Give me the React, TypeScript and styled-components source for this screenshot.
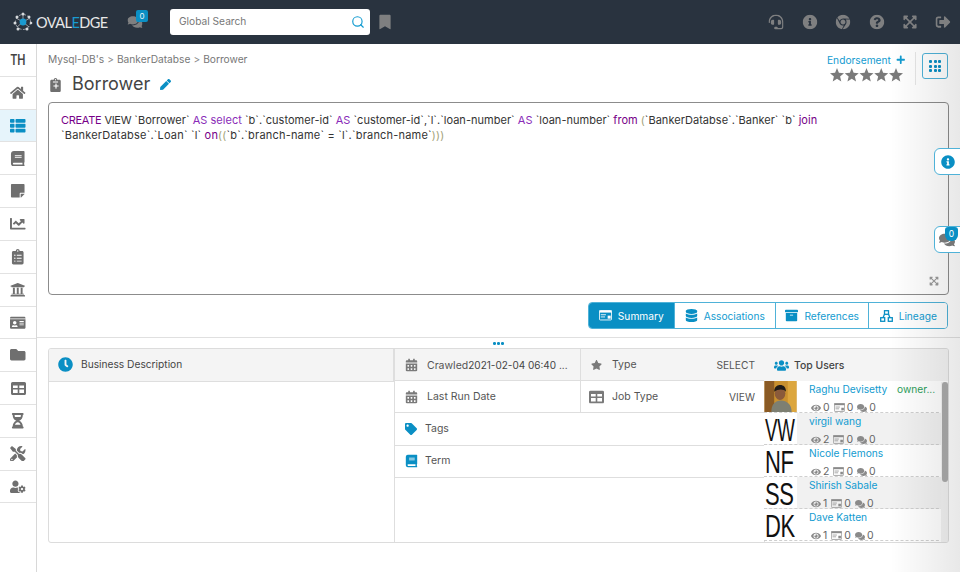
import React from 'react';
import styled, { createGlobalStyle } from 'styled-components';
import {
  FaHome, FaThList, FaBook, FaStickyNote, FaChartLine, FaClipboardList, FaUniversity, FaIdCard, FaFolder,
  FaHourglassHalf, FaTools, FaUserCog, FaHeadset, FaInfoCircle, FaChrome, FaQuestionCircle, FaExpandArrowsAlt,
  FaSignOutAlt, FaComments, FaBookmark, FaPen, FaStar, FaCalendarAlt, FaTag, FaUsers, FaClock, FaDatabase,
  FaArchive, FaEye, FaPlus, FaClipboard,
} from 'react-icons/fa';
import { Search } from 'lucide-react';

const Global = createGlobalStyle`
  html, body { margin: 0; padding: 0; background: #fff; }
  body { width: 960px; height: 572px; overflow: hidden; font-family: Inter, "Noto Sans", "Liberation Sans", sans-serif; color: #444; }
  * { box-sizing: border-box; }
`;

const Page = styled.div`position: relative; width: 960px; height: 572px; overflow: hidden; background: #fff;`;
const Shade = styled.div`
  position: absolute; top: 44px; right: 0; bottom: 0; width: 70px; pointer-events: none; z-index: 5;
  background: linear-gradient(to right, rgba(0,0,0,0), rgba(0,0,0,0.09));
`;
const Header = styled.header`position: absolute; left: 0; top: 0; width: 960px; height: 44px; background: #29333f;`;
const LogoBox = styled.div`position: absolute; left: 13px; top: 12px; width: 20px; height: 20px;`;
const LogoText = styled.div`
  position: absolute; left: 36px; top: 13.5px; font-size: 14.5px; line-height: 17px; font-weight: 400; color: #e8e8e8;
  letter-spacing: -0.55px; white-space: nowrap; font-family: Lato, sans-serif;
  em { font-style: normal; color: #1a9ad0; }
`;
const HeadIcon = styled.div<{ $x: number; $size?: number }>`
  position: absolute; left: ${p => p.$x}px; top: 22px; transform: translate(-50%, -50%); display: flex;
  color: #7e7f80; font-size: ${p => p.$size ?? 15}px;
`;
const HeadBadge = styled.div`
  position: absolute; left: 136px; top: 10px; width: 12px; height: 12px; border-radius: 2px; background: #0a8fc4;
  color: #e8f4fa; font-size: 8px; line-height: 12px; text-align: center;
`;
const SearchBox = styled.div`
  position: absolute; left: 170px; top: 9px; width: 200px; height: 26px; background: #fff; border-radius: 3px;
  font-size: 10.2px; line-height: 25px; color: #777; padding-left: 9px;
`;
const SearchGlyph = styled.div`position: absolute; right: 5px; top: 5.5px; display: flex; color: #129bd0;`;

const Sidebar = styled.nav`position: absolute; left: 0; top: 44px; width: 37px; height: 528px; background: #fff; border-right: 1px solid #d8d8d8;`;
const SideRow = styled.div<{ $active?: boolean }>`
  height: 32.82px; display: flex; align-items: center; justify-content: center; border-bottom: 1px solid #e2e2e2;
  background: ${p => (p.$active ? '#e6f4fb' : '#fff')}; color: ${p => (p.$active ? '#0a8fc4' : '#6f6f6f')}; font-size: 15.5px;
`;
const SideText = styled.span`font-size: 14px; font-weight: 600; color: #444; transform: scaleX(0.78);`;

const Crumbs = styled.div`position: absolute; left: 48px; top: 52px; font-size: 10.2px; line-height: 14px; color: #777; white-space: nowrap;`;
const CrumbSep = styled.span`margin: 0 3px; color: #888;`;
const TitleIcon = styled.div`position: absolute; left: 49px; top: 77px; width: 13px; height: 16px; color: #6f6f6f; font-size: 14px; display: flex; align-items: center; justify-content: center;`;
const TitlePlus = styled.span`position: absolute; left: 3.5px; top: 5.5px; display: flex; color: #fff; font-size: 6px;`;
const Title = styled.h1`position: absolute; left: 72px; top: 73px; margin: 0; font-size: 18px; line-height: 22px; font-weight: 400; color: #444;`;
const TitlePen = styled.div`position: absolute; left: 160px; top: 79px; display: flex; color: #0a8fc4; font-size: 11px;`;

const Endorse = styled.div`position: absolute; left: 827px; top: 52.5px; font-size: 10.2px; line-height: 14px; color: #129bd0; white-space: nowrap;`;
const EndorsePlus = styled.div`position: absolute; left: 896px; top: 55px; display: flex; color: #129bd0; font-size: 9.5px;`;
const Stars = styled.svg`position: absolute; left: 830px; top: 68px; width: 73px; height: 14px; fill: #7a7a7a;`;
const VLine = styled.div`position: absolute; left: 915px; top: 52px; width: 1px; height: 33px; background: #e6e6e6;`;
const AppsButton = styled.div`
  position: absolute; left: 922px; top: 53px; width: 26px; height: 26px; border: 1px solid #4fb2d8; border-radius: 3px;
  display: grid; grid-template-columns: repeat(3, 3px); grid-auto-rows: 3px; gap: 1.2px; align-content: center; justify-content: center;
`;
const AppsDot = styled.i`display: block; background: #0a8fc4; border-radius: 1px;`;

const SqlBox = styled.div`
  position: absolute; left: 48px; top: 102px; width: 901px; height: 193px; border: 1px solid #8c8c8c; border-radius: 4px;
  padding: 10px 12px; font-size: 11px; line-height: 15px; color: #333; background: #fff;
`;
const SqlLine = styled.div<{ $ls: number }>`white-space: nowrap; letter-spacing: ${p => p.$ls}px;`;
const Kw = styled.span`color: #770088;`;
const Kw2 = styled.span`color: #8a2cb8;`;
const Upper = styled.span`letter-spacing: -0.3px;`;
const Paren = styled.span`color: #a3a37a;`;
const SqlExpand = styled.div`position: absolute; right: 9px; bottom: 8px; display: flex; color: #9a9a9a; font-size: 10px;`;

const Tabs = styled.div`
  position: absolute; left: 588px; top: 302px; width: 360px; height: 27px; display: flex; border: 1px solid #4fb2d8; border-radius: 4px; overflow: hidden;
`;
const Tab = styled.div<{ $w: number; $active?: boolean; $first?: boolean }>`
  width: ${p => p.$w}px; display: flex; align-items: center; justify-content: center; gap: 6px; font-size: 10.2px;
  border-left: ${p => (p.$first ? 'none' : '1px solid #4fb2d8')};
  background: ${p => (p.$active ? '#0a8fc4' : '#fff')}; color: ${p => (p.$active ? '#fff' : '#129bd0')};
`;
const TabIcon = styled.span<{ $c?: string }>`display: flex; font-size: 13px; color: ${p => p.$c ?? '#0a8fc4'};`;

const Rule = styled.div`position: absolute; left: 37px; top: 337px; width: 923px; height: 1px; background: #e0e0e0;`;
const Dots = styled.div`position: absolute; left: 493px; top: 342px; display: flex; gap: 1.5px;`;
const Dot = styled.i`display: block; width: 2.5px; height: 2.5px; border-radius: 50%; background: #0a8fc4;`;

const Panel = styled.section`
  position: absolute; left: 48px; top: 348px; width: 901px; height: 195px; border: 1px solid #dcdcdc; border-radius: 3px; background: #fff; overflow: hidden;
`;
const Head = styled.div`position: absolute; background: #f4f4f4; border-bottom: 1px solid #dedede;`;
const DescHead = styled(Head)`
  left: 0; top: 0; width: 345px; height: 33px; display: flex; align-items: center; padding: 0 0 2px 9px; gap: 8px; font-size: 10.2px; color: #444; border-right: 1px solid #dedede;
`;
const ColLine = styled.div<{ $x: number; $h: number }>`position: absolute; left: ${p => p.$x}px; top: 0; width: 1px; height: ${p => p.$h}px; background: #dedede;`;
const Cell = styled.div<{ $x: number; $y: number; $w: number; $grey?: boolean }>`
  position: absolute; left: ${p => p.$x}px; top: ${p => p.$y}px; width: ${p => p.$w}px; height: 32.3px;
  border-bottom: 1px solid #dedede; background: ${p => (p.$grey ? '#f4f4f4' : '#fff')};
  font-size: 10.5px; color: #555; white-space: nowrap;
`;
const CellIcon = styled.span<{ $x: number; $c?: string; $s?: number }>`
  position: absolute; left: ${p => p.$x}px; top: 50%; transform: translateY(-50%); display: flex; color: ${p => p.$c ?? '#7a7a7a'}; font-size: ${p => p.$s ?? 13}px;
`;
const CellLabel = styled.span<{ $x: number }>`position: absolute; left: ${p => p.$x}px; top: 8.5px; line-height: 14px;`;
const CellValue = styled.span`position: absolute; right: 9px; top: 9px; line-height: 14px; font-size: 10.2px;`;
const CellDate = styled.span`color: #444; font-size: 10px;`;

const UsersHead = styled(Head)`
  left: 715px; top: 0; width: 185px; height: 33px; display: flex; align-items: center; padding-left: 10px; gap: 5px; font-size: 10.4px; color: #444; font-weight: 500;
`;
const UserList = styled.div`position: absolute; left: 715px; top: 32px; width: 185px; height: 162px; overflow: hidden;`;
const UserRow = styled.div<{ $grey?: boolean }>`
  position: relative; height: 32.1px; background: ${p => (p.$grey ? '#f1f1f1' : '#fff')}; border-bottom: 1px dashed #cfcfcf;
`;
const Avatar = styled.div`position: absolute; left: 0; top: 0; width: 33px; height: 31px; background: #fff; overflow: hidden; display: flex;`;
const AvatarText = styled.text`font-family: "Liberation Sans", sans-serif; font-size: 22px; fill: #111;`;
const UserName = styled.div`position: absolute; left: 45px; top: 1px; font-size: 10.2px; line-height: 14px; color: #129bd0; white-space: nowrap;`;
const Owner = styled.div`position: absolute; left: 133px; top: 1px; font-size: 10.2px; line-height: 14px; color: #2e9e5b; white-space: nowrap;`;
const Stats = styled.div`position: absolute; left: 47px; top: 20.5px; display: flex; align-items: center; font-size: 10.5px; line-height: 12px; color: #666;`;
const Stat = styled.span`display: flex; align-items: center; gap: 2px; margin-right: 4px; svg { color: #8a8a8a; font-size: 10px; }`;
const Scrollbar = styled.div`position: absolute; left: 893px; top: 33px; width: 6px; height: 100px; border-radius: 3px; background: #ababab;`;
const ScrollTrack = styled.div`position: absolute; left: 892px; top: 33px; width: 8px; height: 160px; background: #f2f2f2;`;

const Float = styled.div<{ $y: number }>`
  position: absolute; left: 934px; top: ${p => p.$y}px; width: 30px; height: 27px; border: 1px solid #4fb2d8; border-radius: 6px 0 0 6px; background: #fff;
  z-index: 6; display: flex; align-items: center; padding-left: 6px; font-size: 14px; color: #0a8fc4;
`;
const FloatBadge = styled.div`
  position: absolute; left: 10px; top: 0; width: 13px; height: 14px; border-radius: 3px 3px 6px 6px; background: #0a8fc4; color: #fff; font-size: 8.5px; line-height: 14px; text-align: center;
`;
const GreyGlyph = styled.span`display: flex; color: #777; font-size: 16px; margin-left: -2px;`;

const CardIcon = ({ c = '#8a8a8a', size = 14 }: { c?: string; size?: number }) => (
  <svg width={size} height={size * 0.8} viewBox="0 0 15 12">
    <rect x="0.5" y="0.5" width="14" height="11" rx="1" fill="none" stroke={c} />
    <rect x="0.5" y="0.5" width="14" height="2.5" fill={c} />
    <rect x="2" y="5" width="6" height="1" fill={c} />
    <rect x="2" y="7.5" width="5" height="1" fill={c} />
    <rect x="10" y="6.5" width="3.5" height="3.5" fill={c} />
  </svg>
);

const TableGlyph = ({ size = 15 }: { size?: number }) => (
  <svg width={size} height={size * 0.87} viewBox="0 0 15 13" fill="currentColor">
    <path fillRule="evenodd" d="M1.5 0h12A1.5 1.5 0 0 1 15 1.5v10a1.5 1.5 0 0 1-1.5 1.5h-12A1.5 1.5 0 0 1 0 11.5v-10A1.5 1.5 0 0 1 1.5 0zM2 3.5V6h4.7V3.5zM8.3 3.5V6H13V3.5zM2 7.5V11h4.7V7.5zM8.3 7.5V11H13V7.5z" />
  </svg>
);

const LineageGlyph = () => (
  <svg width="13" height="12" viewBox="0 0 13 12" fill="none" stroke="currentColor" strokeWidth="1.3">
    <rect x="4.5" y="0.7" width="4" height="3.6" />
    <rect x="0.7" y="7.7" width="4" height="3.6" />
    <rect x="8.3" y="7.7" width="4" height="3.6" />
    <path d="M4.5 4.3L3 7.7M8.5 4.3L10 7.7" />
  </svg>
);

const Logo = () => (
  <svg width="20" height="20" viewBox="0 0 20 20">
    <g stroke="#aeb4ba" strokeWidth="0.8" fill="none">
      <circle cx="10" cy="10" r="7.5" strokeDasharray="3 1.4" />
      <path d="M3 6l7 4M17 6l-7 4M4 15l6-5M16 15l-6-5M10 2v8" />
    </g>
    <g fill="#d6d9dc">
      <circle cx="4" cy="5" r="1.5" /><circle cx="10" cy="2" r="1.5" /><circle cx="16" cy="5" r="1.5" />
      <circle cx="2" cy="11" r="1.5" /><circle cx="18" cy="11" r="1.3" /><circle cx="5" cy="17" r="1.5" /><circle cx="14" cy="17" r="1.5" />
    </g>
    <circle cx="10" cy="10" r="3.4" fill="#1a9ad0" />
  </svg>
);

const Photo = () => (
  <svg width="33" height="31" viewBox="0 0 33 32">
    <rect width="33" height="32" fill="#c8902f" />
    <rect x="0" y="0" width="10" height="32" fill="#8a5a24" />
    <rect x="24" y="0" width="9" height="32" fill="#dca63e" />
    <path d="M7 32c0-8 4-12 10-12s11 4 11 12z" fill="#7d7f72" />
    <ellipse cx="16" cy="13" rx="5.5" ry="6.5" fill="#8a5a3a" />
    <path d="M10 11c0-6 4-7 6.5-7s6 2 5.5 7c-2-3-8-3-12 0z" fill="#1d1a18" />
  </svg>
);

const Initials = ({ text, sx }: { text: string; sx: number }) => (
  <svg width="33" height="31" viewBox="0 0 33 31">
    <AvatarText transform={`translate(1 28) scale(${sx} 1.45)`} letterSpacing="-0.3">{text}</AvatarText>
  </svg>
);

const side = [FaHome, FaThList, FaBook, FaStickyNote, FaChartLine, FaClipboardList, FaUniversity, FaIdCard, FaFolder, TableGlyph, FaHourglassHalf, FaTools, FaUserCog];
const heads = [[776, FaHeadset], [810, FaInfoCircle], [843, FaChrome], [877, FaQuestionCircle], [910, FaExpandArrowsAlt], [943, FaSignOutAlt]] as const;
const users = [
  { name: 'Raghu Devisetty', owner: 'owner...', s: [0, 0, 0] },
  { name: 'virgil wang', i: 'VW', sx: 0.85, s: [2, 0, 0], grey: true },
  { name: 'Nicole Flemons', i: 'NF', sx: 1, s: [2, 0, 0] },
  { name: 'Shirish Sabale', i: 'SS', sx: 1, s: [1, 0, 0], grey: true },
  { name: 'Dave Katten', i: 'DK', sx: 1, s: [1, 0, 0] },
];
const starPath = 'M7 0l1.9 4.8 5.1.4-3.9 3.3 1.2 5L7 10.8 2.7 13.5l1.2-5L0 5.2l5.1-.4z';

export default function App() {
  return (
    <Page>
      <Global />
      <Header>
        <LogoBox><Logo /></LogoBox>
        <LogoText>OVAL<em>E</em>DGE</LogoText>
        <HeadIcon $x={135}><FaComments /></HeadIcon>
        <HeadBadge>0</HeadBadge>
        <SearchBox>
          Global Search
          <SearchGlyph><Search size={14} strokeWidth={2} /></SearchGlyph>
        </SearchBox>
        <HeadIcon $x={385} $size={15}><FaBookmark /></HeadIcon>
        {heads.map(([x, I]) => <HeadIcon key={x} $x={x}><I /></HeadIcon>)}
      </Header>

      <Sidebar>
        <SideRow><SideText>TH</SideText></SideRow>
        {side.map((I, k) => <SideRow key={k} $active={k === 1}><I /></SideRow>)}
      </Sidebar>

      <Crumbs>Mysql-DB's<CrumbSep>&gt;</CrumbSep>BankerDatabse<CrumbSep>&gt;</CrumbSep>Borrower</Crumbs>
      <TitleIcon><FaClipboard /><TitlePlus><FaPlus /></TitlePlus></TitleIcon>
      <Title>Borrower</Title>
      <TitlePen><FaPen /></TitlePen>

      <Endorse>Endorsement</Endorse>
      <EndorsePlus><FaPlus /></EndorsePlus>
      <Stars viewBox="0 0 73 14">
        {[0, 1, 2, 3, 4].map(k => <path key={k} d={starPath} transform={`translate(${k * 14.75} 0)`} />)}
      </Stars>
      <VLine />
      <AppsButton>{Array.from({ length: 9 }, (_, k) => <AppsDot key={k} />)}</AppsButton>

      <SqlBox>
        <SqlLine $ls={0.03}><Kw><Upper>CREATE</Upper></Kw> <Upper>VIEW</Upper> `Borrower` <Kw2>AS</Kw2> <Kw2>select</Kw2> `b`.`customer-id` <Kw2>AS</Kw2> `customer-id`,`l`.`loan-number` <Kw2>AS</Kw2> `loan-number` <Kw>from</Kw> <Paren>(</Paren>`BankerDatabse`.`Banker` `b` <Kw>join</Kw></SqlLine>
        <SqlLine $ls={0.2}>`BankerDatabse`.`Loan` `l` <Kw>on</Kw><Paren>((</Paren>`b`.`branch-name` = `l`.`branch-name`<Paren>)))</Paren></SqlLine>
        <SqlExpand><FaExpandArrowsAlt /></SqlExpand>
      </SqlBox>

      <Tabs>
        <Tab $w={85} $active $first><TabIcon $c="#fff"><CardIcon c="#fff" size={13} /></TabIcon>Summary</Tab>
        <Tab $w={102}><TabIcon><FaDatabase /></TabIcon>Associations</Tab>
        <Tab $w={94}><TabIcon><FaArchive /></TabIcon>References</Tab>
        <Tab $w={79}><TabIcon><LineageGlyph /></TabIcon>Lineage</Tab>
      </Tabs>

      <Rule />
      <Dots><Dot /><Dot /><Dot /></Dots>

      <Panel>
        <DescHead><FaClock color="#0a8fc4" size={15} />Business Description</DescHead>
        <ColLine $x={345} $h={195} />
        <ColLine $x={531} $h={64} />
        <ColLine $x={715} $h={195} />
        <Cell $x={346} $y={0} $w={185} $grey><CellIcon $x={10}><FaCalendarAlt /></CellIcon><CellLabel $x={32}>Crawled<CellDate>2021-02-04 06:40 ...</CellDate></CellLabel></Cell>
        <Cell $x={532} $y={0} $w={183} $grey><CellIcon $x={10} $s={11}><FaStar /></CellIcon><CellLabel $x={31}>Type</CellLabel><CellValue>SELECT</CellValue></Cell>
        <Cell $x={346} $y={32} $w={185}><CellIcon $x={10}><FaCalendarAlt /></CellIcon><CellLabel $x={32}>Last Run Date</CellLabel></Cell>
        <Cell $x={532} $y={32} $w={183}><CellIcon $x={8} $s={15}><TableGlyph /></CellIcon><CellLabel $x={31}>Job Type</CellLabel><CellValue>VIEW</CellValue></Cell>
        <Cell $x={346} $y={64.5} $w={369}><CellIcon $x={10} $c="#0a8fc4" $s={12}><FaTag /></CellIcon><CellLabel $x={30}>Tags</CellLabel></Cell>
        <Cell $x={346} $y={96.8} $w={369}><CellIcon $x={10} $c="#0a8fc4"><FaBook /></CellIcon><CellLabel $x={30}>Term</CellLabel></Cell>

        <UsersHead><FaUsers color="#0a8fc4" size={15} />Top Users</UsersHead>
        <UserList>
          {users.map(u => (
            <UserRow key={u.name} $grey={u.grey}>
              <Avatar>{u.i ? <Initials text={u.i} sx={u.sx ?? 1} /> : <Photo />}</Avatar>
              <UserName>{u.name}</UserName>
              {u.owner && <Owner>{u.owner}</Owner>}
              <Stats>
                <Stat><FaEye />{u.s[0]}</Stat>
                <Stat><CardIcon size={11} />{u.s[1]}</Stat>
                <Stat><FaComments />{u.s[2]}</Stat>
              </Stats>
            </UserRow>
          ))}
        </UserList>
        <ScrollTrack />
        <Scrollbar />
      </Panel>

      <Shade />
      <Float $y={148}><FaInfoCircle /></Float>
      <Float $y={226}><GreyGlyph><FaComments /></GreyGlyph><FloatBadge>0</FloatBadge></Float>
    </Page>
  );
}
